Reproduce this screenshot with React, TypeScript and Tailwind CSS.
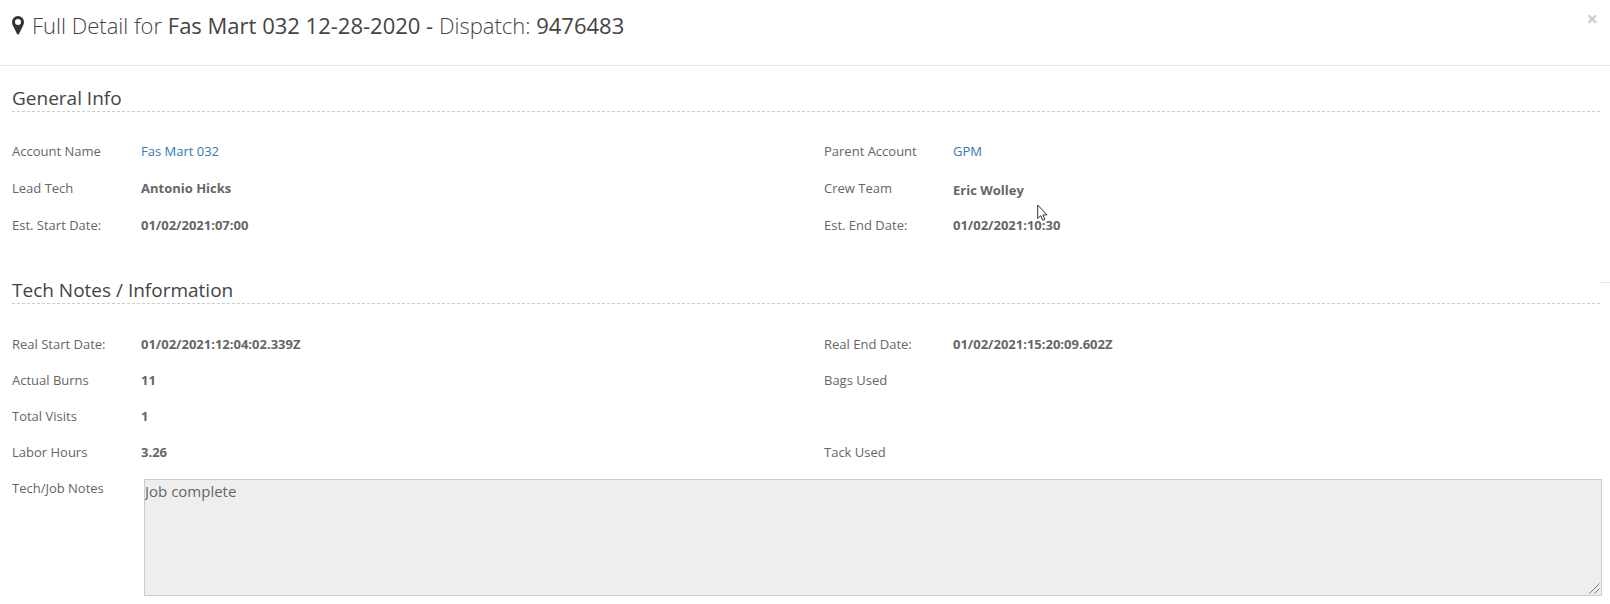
import type { ReactNode } from "react";

function PinIcon() {
  return (
    <svg aria-hidden="true" viewBox="0 0 12 19" className="h-[19px] w-3 shrink-0">
      <path
        fill="#333"
        fillRule="evenodd"
        d="M6 0a6 6 0 0 1 6 6c0 1.3-.4 2.500-1 3.700L7 17.900a1.100 1.100 0 0 1-2 0L1 9.700C.4 8.500 0 7.300 0 6a6 6 0 0 1 6-6Zm0 3a3 3 0 1 0 0 6 3 3 0 0 0 0-6Z"
      />
    </svg>
  );
}

function SectionTitle({ children }: { children: ReactNode }) {
  return (
    <h2 className="border-b border-dashed border-[#ccc] text-[19px] leading-[26px] text-[#444]">
      {children}
    </h2>
  );
}

function Field({ label, children }: { label: string; children?: ReactNode }) {
  return (
    <div className="flex items-start">
      <dt className="w-[129px] shrink-0">{label}</dt>
      <dd className="min-w-0 font-bold">{children}</dd>
    </div>
  );
}

export default function App() {
  return (
    <main className="relative bg-white font-['Open_Sans','Noto_Sans',sans-serif] text-[13px] leading-[18px] text-[#666]">
      <header className="flex items-start justify-between border-b border-[#e5e5e5] px-3 pt-[9px] pb-6">
        <h1 className="flex items-center gap-2 text-[22px] leading-8 text-[#444]">
          <PinIcon />
          <span>
            <span className="font-light">Full Detail for</span> Fas Mart 032 12-28-2020 -{" "}
            <span className="font-light">Dispatch:</span> 9476483
          </span>
        </h1>
        <button type="button" aria-label="Close" className="mt-0.5 text-[20px] leading-4 font-bold text-[#ccc]">
          ×
        </button>
      </header>

      <section className="pt-[19px] pr-[10px] pl-3">
        <SectionTitle>General Info</SectionTitle>
        <dl className="grid auto-rows-[37px] grid-cols-2 gap-x-9 pt-[30px]">
          <Field label="Account Name">
            <a href="#account" className="font-normal text-[#337ab7]">Fas Mart 032</a>
          </Field>
          <Field label="Parent Account">
            <a href="#parent" className="font-normal text-[#337ab7]">GPM</a>
          </Field>
          <Field label="Lead Tech">Antonio Hicks</Field>
          <Field label="Crew Team">
            <div className="pt-0.5">Eric Wolley</div>
          </Field>
          <Field label="Est. Start Date:">01/02/2021:07:00</Field>
          <Field label="Est. End Date:">01/02/2021:10:30</Field>
        </dl>
      </section>

      <section className="relative pt-6 pr-[10px] pl-3">
        <div className="absolute top-[29px] right-0 h-px w-[10px] bg-[#e5e5e5]" />
        <SectionTitle>Tech Notes / Information</SectionTitle>
        <dl className="grid auto-rows-[36px] grid-cols-2 gap-x-9 pt-[31px]">
          <Field label="Real Start Date:">01/02/2021:12:04:02.339Z</Field>
          <Field label="Real End Date:">01/02/2021:15:20:09.602Z</Field>
          <Field label="Actual Burns">11</Field>
          <Field label="Bags Used" />
          <div className="col-span-2">
            <Field label="Total Visits">1</Field>
          </div>
          <Field label="Labor Hours">3.26</Field>
          <Field label="Tack Used" />
        </dl>
        <div className="flex items-start">
          <label htmlFor="notes" className="w-[132px] shrink-0">Tech/Job Notes</label>
          <div className="relative -mr-0.5 min-w-0 flex-1">
            <textarea
              id="notes"
              readOnly
              defaultValue="Job complete"
              className="block h-[117px] w-full resize-none border border-[#ccc] bg-[#eee] text-[15px] leading-[22px] outline-none"
            />
            <svg
              aria-hidden="true"
              viewBox="0 0 11 11"
              className="pointer-events-none absolute right-0.5 bottom-0.5 size-[11px]"
            >
              <path d="M.5 10.500 10.500.5M5.500 10.500l5-5" fill="none" stroke="#777" />
            </svg>
          </div>
        </div>
      </section>

      <svg aria-hidden="true" viewBox="0 0 12 19" className="absolute top-[204px] left-[1037px] h-[19px] w-3">
        <path d="M.7 1v13.500l3-2.800 2 4.600 2.200-1-2-4.400h4.200Z" fill="#fff" stroke="#333" />
      </svg>
    </main>
  );
}
